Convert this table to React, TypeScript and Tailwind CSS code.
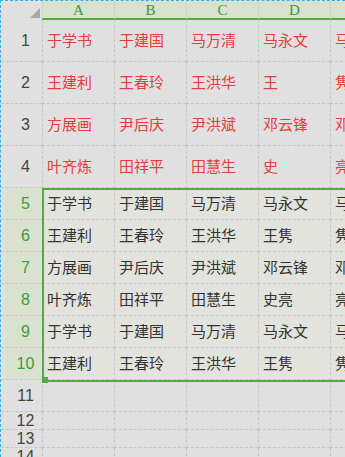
import React from 'react';

const cols = ['A', 'B', 'C', 'D', 'E'];

interface Row {
  n: number;
  h: number;
  cells: string[];
  kind: 'red' | 'sel' | 'empty';
}

const rows: Row[] = [
  { n: 1, h: 42, kind: 'red', cells: ['于学书', '于建国', '马万清', '马永文', '马永文'] },
  { n: 2, h: 42, kind: 'red', cells: ['王建利', '王春玲', '王洪华', '王', '隽'] },
  { n: 3, h: 42, kind: 'red', cells: ['方展画', '尹后庆', '尹洪斌', '邓云锋', '邓云锋'] },
  { n: 4, h: 42, kind: 'red', cells: ['叶齐炼', '田祥平', '田慧生', '史', '亮'] },
  { n: 5, h: 32, kind: 'sel', cells: ['于学书', '于建国', '马万清', '马永文', '马永文'] },
  { n: 6, h: 32, kind: 'sel', cells: ['王建利', '王春玲', '王洪华', '王隽', '隽'] },
  { n: 7, h: 32, kind: 'sel', cells: ['方展画', '尹后庆', '尹洪斌', '邓云锋', '邓云锋'] },
  { n: 8, h: 32, kind: 'sel', cells: ['叶齐炼', '田祥平', '田慧生', '史亮', '亮'] },
  { n: 9, h: 32, kind: 'sel', cells: ['于学书', '于建国', '马万清', '马永文', '马永文'] },
  { n: 10, h: 32, kind: 'sel', cells: ['王建利', '王春玲', '王洪华', '王隽', '隽'] },
  { n: 11, h: 32, kind: 'empty', cells: ['', '', '', '', ''] },
  { n: 12, h: 18, kind: 'empty', cells: ['', '', '', '', ''] },
  { n: 13, h: 18, kind: 'empty', cells: ['', '', '', '', ''] },
  { n: 14, h: 18, kind: 'empty', cells: ['', '', '', '', ''] },
];

const cjk = { fontFamily: '"Noto Sans CJK SC", "Noto Sans", sans-serif' };

function RowHeader({ row }: { row: Row }) {
  const sel = row.kind === 'sel';
  return (
    <div className="flex items-stretch border-b border-dashed border-[#c6c6c6]" style={{ height: row.h }}>
      <div
        className={`ml-1 flex flex-1 items-center justify-center pl-1 text-[16px] font-['Liberation_Sans',sans-serif] ${
          sel ? 'bg-[#d9e2cf] text-[#3c9a3c]' : 'text-[#444]'
        }`}
      >
        {row.n}
      </div>
    </div>
  );
}

function Cell({ text, row }: { text: string; row: Row }) {
  const color = row.kind === 'red' ? 'text-[#e43d3d]' : 'text-[#333]';
  const bg = row.kind === 'sel' ? 'bg-[#e3e3de]' : '';
  return (
    <div
      className={`flex items-center overflow-hidden whitespace-nowrap border-b border-l border-dashed border-[#c6c6c6] pl-1 text-[15px] ${color} ${bg}`}
      style={{ height: row.h, ...cjk }}
    >
      {text}
    </div>
  );
}

export default function App() {
  return (
    <div className="relative h-[457px] w-[345px] overflow-hidden border-l border-t border-dashed border-[#2bb3ea] bg-[#e0e0e0]">
      <div className="grid grid-cols-[41px_72px_72px_72px_72px_72px]">
        {/* header row */}
        <div className="relative h-[19px] border-b-2 border-[#e0e0e0]">
          <svg className="absolute left-[29px] top-[7px]" width="10" height="10" viewBox="0 0 10 10">
            <polygon points="10,0 10,10 0,10" fill="#a8a8a8" />
          </svg>
        </div>
        {cols.map((c) => (
          <div
            key={c}
            className="flex h-[19px] items-center justify-center border-b-2 border-l border-dotted border-[#c6c6c6] border-b-[#55a644] bg-[#d8e2cd] pt-[1px] font-['Liberation_Serif',serif] text-[15px] text-[#3c9a3c]"
            style={{ borderBottomStyle: 'solid' }}
          >
            {c}
          </div>
        ))}

        {rows.map((row) => (
          <React.Fragment key={row.n}>
            <RowHeader row={row} />
            {row.cells.map((t, i) => (
              <Cell key={i} text={t} row={row} />
            ))}
          </React.Fragment>
        ))}
      </div>

      {/* selection */}
      <div className="pointer-events-none absolute left-[41px] top-[187px] h-[194px] w-[320px] border-2 border-[#55a644]" />
      <div className="absolute left-[41px] top-[376px] h-[6px] w-[6px] bg-[#55a644]" />
    </div>
  );
}
